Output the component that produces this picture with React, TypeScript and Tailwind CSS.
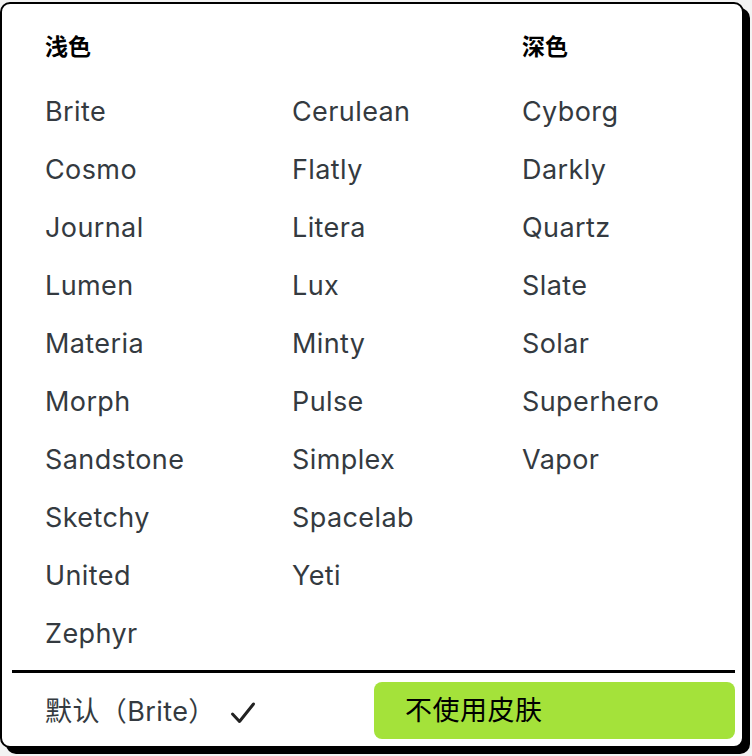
import React from 'react';

const light1 = ['Brite', 'Cosmo', 'Journal', 'Lumen', 'Materia', 'Morph', 'Sandstone', 'Sketchy', 'United', 'Zephyr'];
const light2 = ['Cerulean', 'Flatly', 'Litera', 'Lux', 'Minty', 'Pulse', 'Simplex', 'Spacelab', 'Yeti'];
const dark = ['Cyborg', 'Darkly', 'Quartz', 'Slate', 'Solar', 'Superhero', 'Vapor'];

const font = { fontFamily: '"Inter", "Noto Sans CJK SC", sans-serif' };

const ThemeColumn: React.FC<{ items: string[] }> = ({ items }) => (
  <ul className="flex flex-col">
    {items.map((name) => (
      <li key={name} className="h-[58px] flex items-center text-[27px] tracking-[0.4px] text-[#343a40] leading-none">
        {name}
      </li>
    ))}
  </ul>
);

export default function App() {
  return (
    <div className="w-[752px] h-[756px] bg-[#f3f3f3] overflow-hidden" style={font}>
      <div className="mt-[2px] w-[744px] bg-white border-2 border-black rounded-[10px] shadow-[6px_6px_0_0_#000]">
        {/* theme lists */}
        <div className="pl-[43px] pt-[28px] grid grid-cols-[247px_230px_1fr]">
          <h3 className="col-span-2 h-[30px] flex items-center text-[23px] font-bold text-black">浅色</h3>
          <h3 className="h-[30px] flex items-center text-[23px] font-bold text-black">深色</h3>
          <div className="mt-[20px]"><ThemeColumn items={light1} /></div>
          <div className="mt-[20px]"><ThemeColumn items={light2} /></div>
          <div className="mt-[20px]"><ThemeColumn items={dark} /></div>
        </div>

        <div className="mt-[8px] ml-[10px] mr-[7px] h-[3px] bg-black" />

        {/* footer */}
        <div className="pl-[43px] pr-[7px] pt-[9px] pb-[7px] flex items-center">
          <div className="flex-1 flex items-center pt-[4px] text-[27px] tracking-[0.4px] text-[#343a40]">
            <span>默认（Brite）</span>
            <svg className="ml-[14px]" width="26" height="24" viewBox="0 0 26 24" fill="none">
              <path d="M2.5 13 L9.5 20.5 L23.5 3" stroke="#222" strokeWidth="3" strokeLinecap="round" strokeLinejoin="round" />
            </svg>
          </div>
          <button className="w-[361px] h-[57px] rounded-[8px] bg-[#a4e23a] text-left pl-[31px] pt-[2px] text-[27px] tracking-[0.5px] text-black">
            不使用皮肤
          </button>
        </div>
      </div>
    </div>
  );
}
